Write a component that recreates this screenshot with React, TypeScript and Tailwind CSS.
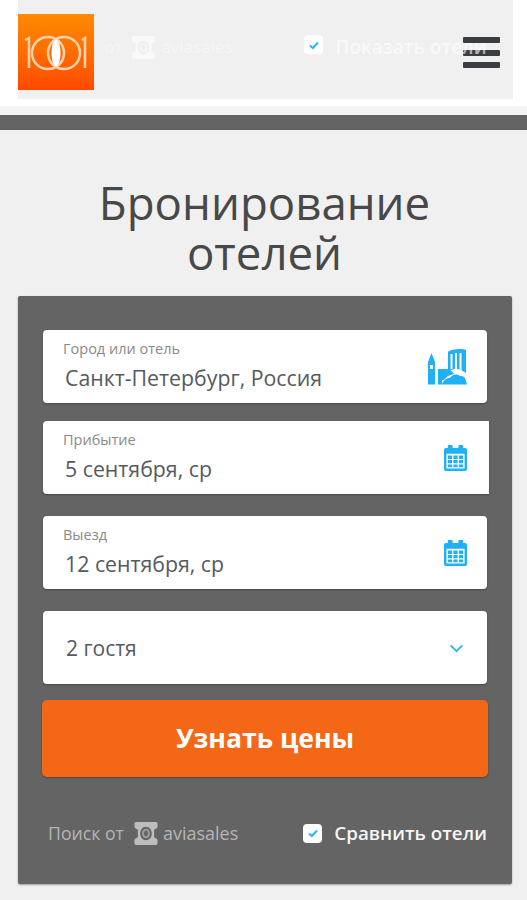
import React from 'react';

const font = { fontFamily: '"Open Sans", sans-serif' };

const AviasalesIcon = ({ className }: { className: string }) => (
  <svg viewBox="0 0 26 26" className={className} fill="currentColor">
    <path fillRule="evenodd" d="M3 1h20c1.500 0 2 1 2 2v3c0 1.500-2 2-3.500 3v8c1.500 1 3.500 1.500 3.500 3v3c0 1-.5 2-2 2H3c-1.500 0-2-1-2-2v-3c0-1.500 2-2 3.500-3V9C3 8 1 7.500 1 6V3c0-1 .5-2 2-2zM13 6c-3.500 0-6 3-6 7s2.500 7 6 7 6-3 6-7-2.500-7-6-7z" />
    <path d="M13 8c2.200 0 4 2 4 5s-1.800 5-4 5-4-2-4-5 1.800-5 4-5zm0 2c-1 0-2 1.200-2 3s1 3 2 3 2-1.200 2-3-1-3-2-3z" opacity="0.65" />
  </svg>
);

const CheckBox = ({ className }: { className: string }) => (
  <span className={`flex h-[19px] w-[19px] shrink-0 items-center justify-center rounded-[4px] bg-white ${className}`}>
    <svg viewBox="0 0 12 12" className="h-3 w-3" fill="none" stroke="#29b6f6" strokeWidth="2">
      <path d="M2 6.500l2.800 2.500L10 3.500" />
    </svg>
  </span>
);

const CalendarIcon = () => (
  <svg viewBox="0 0 24 27" className="h-[26px] w-[23px]" fill="#1fb0f5">
    <path fillRule="evenodd" d="M5 0h3a1 1 0 0 1 1 1v2h6V1a1 1 0 0 1 1-1h3a1 1 0 0 1 1 1v2h2a2 2 0 0 1 2 2v20a2 2 0 0 1-2 2H2a2 2 0 0 1-2-2V5a2 2 0 0 1 2-2h2V1a1 1 0 0 1 1-1zM2.500 9v15.500h19V9z" />
    <path d="M4 11h4.500v3.500H4zM9.800 11h4.400v3.500H9.800zM15.500 11H20v3.500h-4.500zM4 15.700h4.500v3.300H4zM9.800 15.700h4.400v3.300H9.800zM15.500 15.700H20v3.300h-4.500zM4 20.200h4.500v3H4zM9.800 20.200h4.400v3H9.800zM15.500 20.200H20v3h-4.500z" />
  </svg>
);

const CityIcon = () => (
  <svg viewBox="0 0 40 38" className="h-[38px] w-[40px]" fill="#1fb0f5">
    {/* clock tower */}
    <path fillRule="evenodd" d="M1 14l3.500-9L8 14v22.500H1zM3 17v4h3v-4z" />
    {/* arched building */}
    <path d="M11 21h8c3.500 0 6.500 2 8 5-4 .5-8 3-10 6h-2v4.500h-4z" />
    {/* tall columned building */}
    <path fillRule="evenodd" d="M21 4c3-3 14-4 18-2v23l-5-3c-4-1.500-8-1-11 .5H21zM23.500 6v15h2V6zM28 5v16h2V5zM32.500 5v17h2V5z" />
    {/* domes */}
    <path d="M15 36.500c1-4 4.500-6.500 8-6.500 1.500-2.500 4-4 7-3.500 1 .2 2 .7 3 1.500 3-.5 5.500 1.500 6 5l1 3.500z" />
  </svg>
);

const Hamburger = () => (
  <div className="flex w-[37px] flex-col gap-[6.5px]">
    <div className="h-[6px] rounded-[1px] bg-[#3a3d42]" />
    <div className="h-[6px] rounded-[1px] bg-[#3a3d42]" />
    <div className="h-[6px] rounded-[1px] bg-[#3a3d42]" />
  </div>
);

const Logo = () => (
  <div className="h-[76px] w-[76px] bg-gradient-to-b from-[#ff8a00] to-[#ff4800]">
    <svg viewBox="0 0 76 76" className="h-[76px] w-[76px]" fill="none" stroke="#ffd3ae" strokeWidth="2.500">
      <path d="M7 26l4-2v30" />
      <circle cx="30" cy="39" r="16" />
      <circle cx="46" cy="39" r="16" />
      <path d="M38 25c6 4 6 24 0 28-6-4-6-24 0-28z" fill="#ffffff" stroke="none" />
      <path d="M64 26l3-2v30" />
    </svg>
  </div>
);

const Field = ({ label, value, icon, iconPos, className }: { label: string; value: string; icon: React.ReactNode; iconPos: string; className: string }) => (
  <div className={`relative h-[73px] rounded-[4px] bg-white shadow-[0_1px_2px_rgba(0,0,0,0.3)] ${className}`}>
    <div className="pt-[10px] pl-[20px] text-[14.5px] leading-[18px] text-[#8a8a8a]">{label}</div>
    <div className="pt-[6px] pl-[22px] text-[21.3px] leading-[28px] text-[#555a60]">{value}</div>
    <div className={`absolute top-0 flex h-full items-center ${iconPos}`}>{icon}</div>
  </div>
);

export default function App() {
  return (
    <div className="relative min-h-[900px] bg-[#f0f0f0]" style={font}>
      {/* Fixed header lying over the page */}
      <div className="absolute top-[14px] left-[18px]">
        <Logo />
      </div>
      <div className="absolute top-[37px] left-[463px]">
        <Hamburger />
      </div>

      {/* Previous block, scrolled away */}
      <div className="h-[106px] bg-white px-[18px]">
        <div className="flex h-[99px] w-[495px] items-start bg-[#f0f0f0] pt-[35px] text-white">
          <span className="ml-[86px] text-[17px] leading-[24px] opacity-40">от</span>
          <AviasalesIcon className="ml-[9px] h-[25px] w-[25px] opacity-60" />
          <span className="ml-[5px] text-[17px] leading-[24px] opacity-40">aviasales</span>
          <CheckBox className="ml-[72px]" />
          <span className="ml-[12px] whitespace-nowrap text-[19px] leading-[24px] font-semibold opacity-60">Показать отели</span>
        </div>
      </div>
      <div className="h-[9px] bg-[#f4f4f4]" />
      <div className="h-[15px] bg-[#646464]" />

      <h1 className="mt-[47px] pl-[2px] text-center text-[45.600px] leading-[50px] font-normal text-[#484848]">
        Бронирование<br />отелей
      </h1>

      <div className="mx-[18px] mt-[19px] h-[588px] w-[494px] rounded-[2px] bg-[#646464] px-[25px] pt-[34px] shadow-[0_1px_2px_rgba(0,0,0,0.35)]">
        <Field label="Город или отель" value="Санкт-Петербург, Россия" icon={<CityIcon />} iconPos="right-[20px]" className="" />
        <Field label="Прибытие" value="5 сентября, ср" icon={<CalendarIcon />} iconPos="right-[22px]" className="mt-[18px] w-[446px] rounded-r-none" />
        <Field label="Выезд" value="12 сентября, ср" icon={<CalendarIcon />} iconPos="right-[20px]" className="mt-[22px]" />

        <div className="mt-[22px] flex h-[73px] items-center justify-between rounded-[4px] bg-white pt-[2px] pr-[23px] pl-[23px] shadow-[0_1px_2px_rgba(0,0,0,0.3)]">
          <span className="text-[21px] text-[#555a60]">2 гостя</span>
          <svg viewBox="0 0 16 10" className="h-[9px] w-[15px]" fill="none" stroke="#29b6f6" strokeWidth="2">
            <path d="M1.500 1.500L8 8l6.500-6.500" />
          </svg>
        </div>

        <button className="mt-[16px] -ml-px flex h-[77px] w-[446px] items-center justify-center rounded-[5px] bg-[#f46716] text-[26.600px] font-bold text-white shadow-[0_1px_2px_rgba(0,0,0,0.3)]">
          Узнать цены
        </button>

        <div className="mt-[42px] flex w-[460px] items-center">
          <span className="ml-[5px] whitespace-nowrap text-[17.700px] text-[#b4b4b4]">Поиск от</span>
          <AviasalesIcon className="ml-[9px] h-[25px] w-[26px] shrink-0 text-[#bdbdbd]" />
          <span className="ml-[4px] text-[18px] text-[#b4b4b4]">aviasales</span>
          <CheckBox className="ml-[65px]" />
          <span className="ml-[12px] whitespace-nowrap text-[18.800px] font-semibold text-[#f5f5f5]">Сравнить отели</span>
        </div>
      </div>
    </div>
  );
}
